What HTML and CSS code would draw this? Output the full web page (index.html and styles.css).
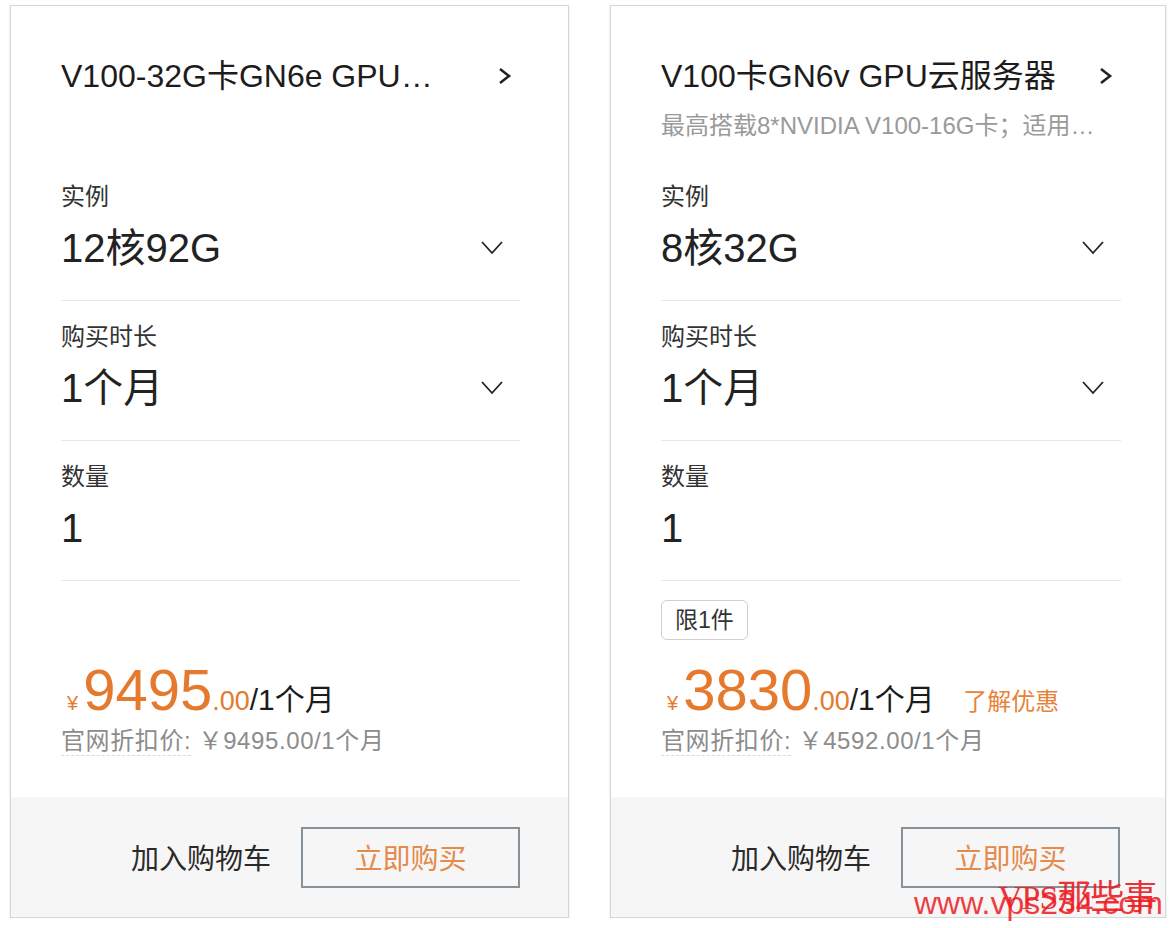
FILE: index.html
```html
<!DOCTYPE HTML>
<html>
<head>
  <title>GPU云服务器</title>
  <meta charset="utf-8">
  <meta name="viewport" content="width=device-width, initial-scale=1">
  <link rel="stylesheet" href="styles.css">
</head>
<body>
  <div class="cards">

    <div class="card">
      <div class="card-body">
        <div class="card-head">
          <div class="title-row">
            <div class="title">V100-32G卡GN6e GPU云服务器</div>
            <svg class="arrow-right" width="14" height="18" viewBox="0 0 14 18"><path d="M2 2 L11 9 L2 16" fill="none" stroke="#222" stroke-width="2.6"/></svg>
          </div>
        </div>

        <div class="field">
          <div class="label">实例</div>
          <div class="value-row">
            <span class="value">12核92G</span>
            <svg class="arrow-down" width="22" height="16" viewBox="0 0 22 16"><path d="M1 2 L11 13 L21 2" fill="none" stroke="#222" stroke-width="1.8"/></svg>
          </div>
        </div>
        <div class="field">
          <div class="label">购买时长</div>
          <div class="value-row">
            <span class="value">1个月</span>
            <svg class="arrow-down" width="22" height="16" viewBox="0 0 22 16"><path d="M1 2 L11 13 L21 2" fill="none" stroke="#222" stroke-width="1.8"/></svg>
          </div>
        </div>
        <div class="field">
          <div class="label">数量</div>
          <div class="value-row">
            <span class="value">1</span>
          </div>
        </div>

        <div class="tag-row"></div>
        <div class="price-row">
          <span class="yen">¥</span><span class="big">9495</span><span class="cents">.00</span><span class="per">/1个月</span>
        </div>
        <div class="origin"><span class="origin-label">官网折扣价:</span> ￥9495.00/1个月</div>
      </div>
      <div class="card-foot">
        <span class="cart">加入购物车</span>
        <button class="buy">立即购买</button>
      </div>
    </div>

    <div class="card">
      <div class="card-body">
        <div class="card-head">
          <div class="title-row">
            <div class="title">V100卡GN6v GPU云服务器</div>
            <svg class="arrow-right" width="14" height="18" viewBox="0 0 14 18"><path d="M2 2 L11 9 L2 16" fill="none" stroke="#222" stroke-width="2.6"/></svg>
          </div>
          <div class="subtitle">最高搭载8*NVIDIA V100-16G卡；适用于深度学习训练</div>
        </div>

        <div class="field">
          <div class="label">实例</div>
          <div class="value-row">
            <span class="value">8核32G</span>
            <svg class="arrow-down" width="22" height="16" viewBox="0 0 22 16"><path d="M1 2 L11 13 L21 2" fill="none" stroke="#222" stroke-width="1.8"/></svg>
          </div>
        </div>
        <div class="field">
          <div class="label">购买时长</div>
          <div class="value-row">
            <span class="value">1个月</span>
            <svg class="arrow-down" width="22" height="16" viewBox="0 0 22 16"><path d="M1 2 L11 13 L21 2" fill="none" stroke="#222" stroke-width="1.8"/></svg>
          </div>
        </div>
        <div class="field">
          <div class="label">数量</div>
          <div class="value-row">
            <span class="value">1</span>
          </div>
        </div>

        <div class="tag-row"><span class="tag">限1件</span></div>
        <div class="price-row">
          <span class="yen">¥</span><span class="big">3830</span><span class="cents">.00</span><span class="per">/1个月</span>
          <a class="promo">了解优惠</a>
        </div>
        <div class="origin"><span class="origin-label">官网折扣价:</span> ￥4592.00/1个月</div>
      </div>
      <div class="card-foot">
        <span class="cart">加入购物车</span>
        <button class="buy">立即购买</button>
      </div>
    </div>

  </div>

  <div class="watermark">
    <span class="wm-url">www.vps234.com</span>
    <span class="wm-name">VPS那些事</span>
  </div>
</body>
</html>
```

FILE: styles.css
```css
body {
  font-family: "Liberation Sans", "Noto Sans CJK SC", sans-serif;
  background-color: #fff;
  margin: 0;
  color: #222;
}

.cards {
  display: flex;
  gap: 41px;
  padding: 5px 0 0 10px;
}

.card {
  width: 557px;
  height: 911px;
  border: 1px solid #d6d6d6;
  box-shadow: 0 1px 2px rgba(0, 0, 0, 0.12);
  display: flex;
  flex-direction: column;
}

.card + .card {
  width: 554px;
}

.card-body {
  flex: 1;
  padding: 0 48px 0 50px;
}

.card + .card .card-body {
  padding-right: 44px;
}

.card-head {
  height: 105px;
  padding-top: 50px;
}

.title-row {
  display: flex;
  align-items: center;
  height: 40px;
}

.title {
  font-size: 32px;
  line-height: 40px;
  max-width: 398px;
  white-space: nowrap;
  overflow: hidden;
  text-overflow: ellipsis;
  color: #1c1c1c;
}

.arrow-right {
  margin-left: auto;
  margin-right: 8px;
}

.subtitle {
  margin-top: 14px;
  max-width: 450px;
  font-size: 24px;
  line-height: 32px;
  color: #9a9a9a;
  white-space: nowrap;
  overflow: hidden;
  text-overflow: ellipsis;
}

.field {
  padding: 21px 0 27px;
  border-bottom: 1px solid #e8e8e8;
}

.label {
  font-size: 24px;
  line-height: 30px;
  color: #333;
}

.value-row {
  display: flex;
  align-items: center;
  margin-top: 11px;
  height: 50px;
}

.value {
  font-size: 40px;
  line-height: 50px;
  color: #222;
}

.arrow-down {
  margin-left: auto;
  margin-right: 17px;
}

.tag-row {
  height: 40px;
  padding-top: 19px;
}

.tag {
  display: inline-block;
  height: 38px;
  line-height: 38px;
  padding: 0 13px;
  border: 1px solid #cfcfcf;
  border-radius: 6px;
  font-size: 23px;
  color: #333;
}

.price-row {
  margin-top: 20px;
  height: 60px;
  line-height: 60px;
  white-space: nowrap;
}

.yen {
  font-size: 20px;
  color: #e57a2f;
  margin: 0 5px 0 6px;
}

.big {
  font-size: 58px;
  color: #e57a2f;
}

.cents {
  font-size: 27px;
  color: #e57a2f;
}

.per {
  font-size: 30px;
  color: #1c1c1c;
}

.promo {
  font-size: 24px;
  color: #e8833a;
  margin-left: 24px;
}

.origin {
  margin-top: 6px;
  font-size: 24px;
  line-height: 30px;
  letter-spacing: 0.6px;
  color: #8c8c8c;
}

.origin-label {
  border-bottom: 1px dashed #d9d9d9;
  padding-bottom: 1px;
}

.card-foot {
  height: 120px;
  background-color: #f6f6f6;
  display: flex;
  align-items: center;
  justify-content: flex-end;
  padding-right: 48px;
  gap: 30px;
}

.card + .card .card-foot {
  padding-right: 45px;
}

.cart {
  font-size: 28px;
  color: #2a2a2a;
}

.buy {
  width: 219px;
  height: 61px;
  border: 2px solid #87919a;
  background-color: transparent;
  font-family: "Liberation Sans", "Noto Sans CJK SC", sans-serif;
  font-size: 28px;
  color: #e38a4c;
  cursor: pointer;
}

/* watermark over the corner */
.watermark {
  position: absolute;
  left: 914px;
  top: 870px;
  width: 260px;
  height: 52px;
  color: #ec1c24;
}

.wm-url {
  position: absolute;
  left: 0;
  top: 15px;
  font-family: "Liberation Sans", sans-serif;
  font-size: 32px;
  opacity: 0.85;
}

.wm-name {
  position: absolute;
  left: 84px;
  top: 0;
  font-family: "Liberation Serif", "Noto Sans CJK SC", serif;
  font-size: 34px;
  letter-spacing: -1px;
  opacity: 0.9;
}
```
